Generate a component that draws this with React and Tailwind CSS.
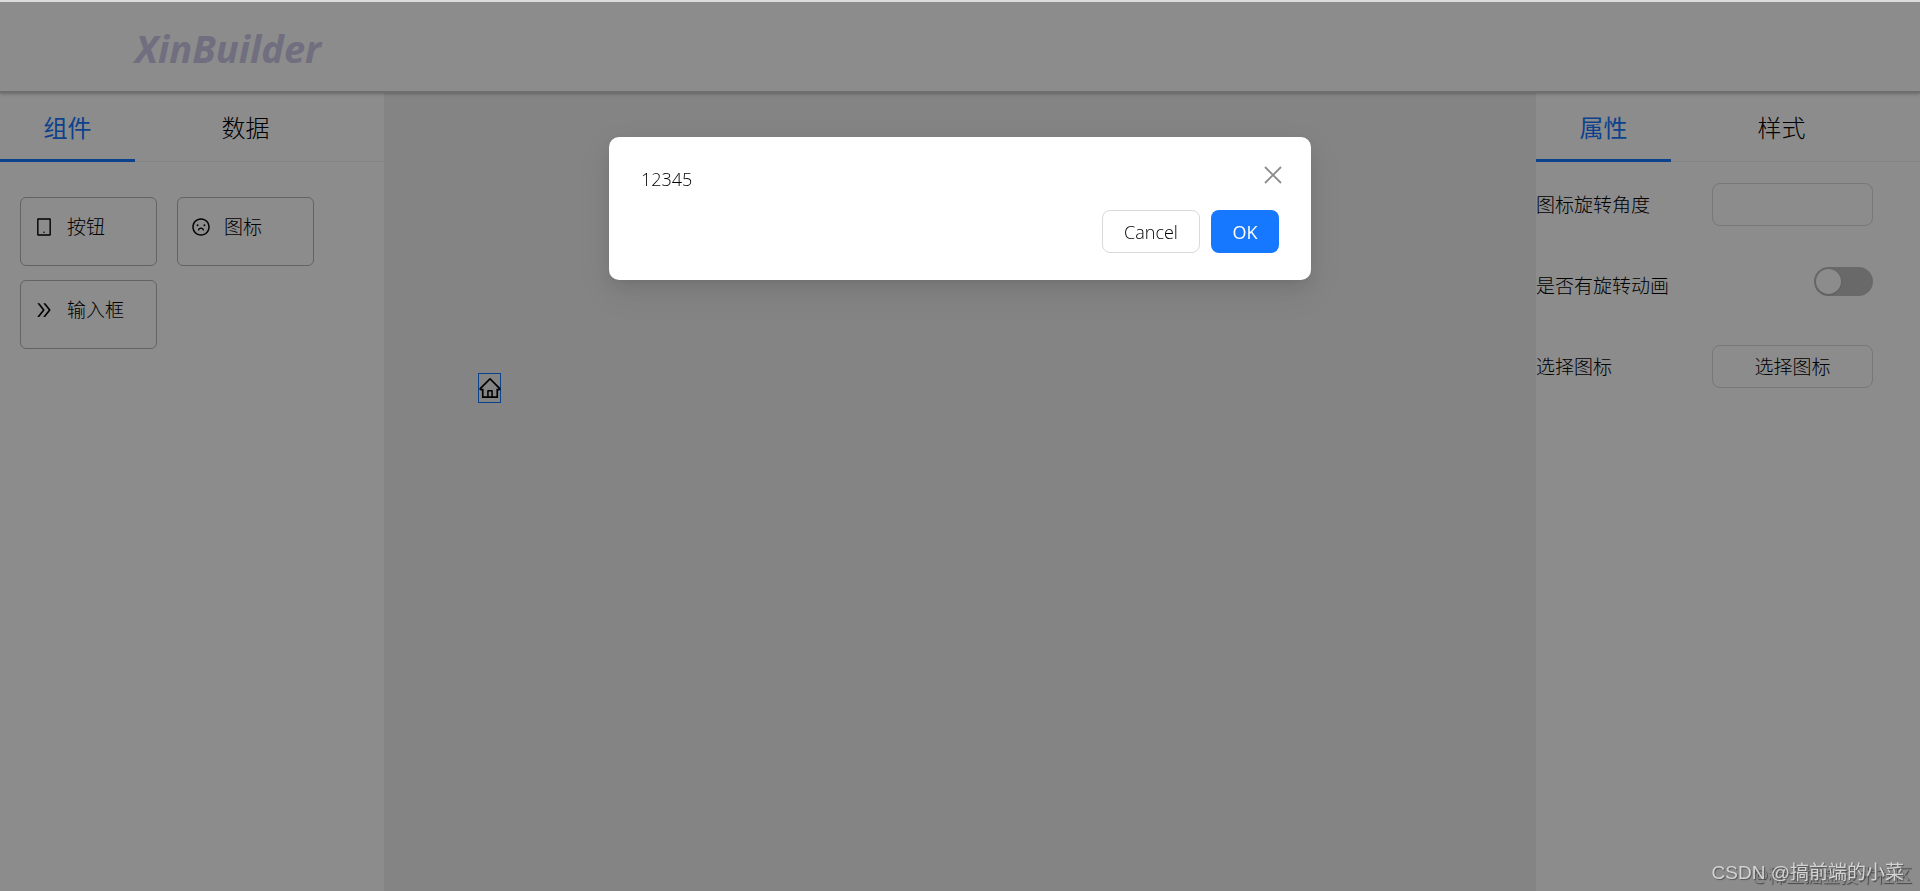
import React, { useState } from "react";
import {
  AiOutlineTablet,
  AiOutlineFrown,
  AiOutlineDoubleRight,
  AiOutlineHome,
} from "react-icons/ai";

const components = [
  { name: "按钮", Icon: AiOutlineTablet },
  { name: "图标", Icon: AiOutlineFrown },
  { name: "输入框", Icon: AiOutlineDoubleRight },
];

const Tabs = ({ items }) => {
  const [active, setActive] = useState(items[0]);

  return (
    <div className="flex gap-[43px] border-b border-[#f0f0f0]">
      {items.map((item) => (
        <button
          key={item}
          onClick={() => setActive(item)}
          className={
            item === active
              ? "w-[135px] h-[69px] pt-1 -mb-px text-2xl font-normal border-b-3 border-[#1677ff] text-[#1677ff]"
              : "w-[135px] h-[69px] pt-1 -mb-px text-2xl border-b-3 border-transparent"
          }
        >
          {item}
        </button>
      ))}
    </div>
  );
};

const Header = () => (
  <header className="relative z-10 h-[93px] flex items-center px-[135px] pt-1 border-t-2 border-t-[#dcdcdc] border-b-2 border-b-[#c8c8c8] shadow-[0_1px_3px_rgba(0,0,0,0.25)]">
    <h1 className="text-[38px] font-bold italic text-[#ccc8e8]">XinBuilder</h1>
  </header>
);

const LeftPanel = () => (
  <aside className="w-1/5 bg-white">
    <Tabs items={["组件", "数据"]} />
    <div className="flex flex-wrap gap-x-5 gap-y-[14px] px-5 pt-[35px]">
      {components.map(({ name, Icon }) => (
        <div key={name} className="w-[137px] h-[69px] flex items-start pl-[13px] pt-[15px] border border-[#b4b4b4] rounded-md">
          <Icon className="w-5 h-7 mr-[13px]" />
          <span className="text-[19px] leading-7">{name}</span>
        </div>
      ))}
    </div>
  </aside>
);

const RightPanel = () => {
  const [angle, setAngle] = useState("");
  const [animated, setAnimated] = useState(false);

  return (
    <aside className="w-1/5 bg-white">
      <Tabs items={["属性", "样式"]} />
      <div className="flex flex-col gap-[38px] pt-[21px] pr-[47px] text-[19px]">
        <div className="h-[43px] flex items-center justify-between">
          <label htmlFor="angle" className="pt-[2px]">图标旋转角度</label>
          <input id="angle" type="text" value={angle} onChange={(e) => setAngle(e.target.value)} className="w-[161px] h-[43px] px-3 border border-[#d9d9d9] rounded-lg outline-none" />
        </div>
        <div className="h-[43px] flex items-center justify-between">
          <label htmlFor="animated" className="pt-[2px]">是否有旋转动画</label>
          <span className="relative self-start mt-[3px] w-[59px] h-[29px] rounded-full bg-[#bfbfbf]">
            <input id="animated" type="checkbox" role="switch" checked={animated} onChange={(e) => setAnimated(e.target.checked)} className="peer absolute inset-0 w-full h-full opacity-0" />
            <span className="absolute left-[2px] top-[2px] w-[25px] h-[25px] rounded-full bg-white shadow peer-checked:left-8 pointer-events-none" />
          </span>
        </div>
        <div className="h-[43px] flex items-center justify-between">
          <span className="pt-[2px]">选择图标</span>
          <button className="w-[161px] h-[43px] pt-[2px] border border-[#d9d9d9] rounded-lg">选择图标</button>
        </div>
      </div>
    </aside>
  );
};

const Modal = ({ onClose }) => (
  <div className="fixed z-20 inset-x-0 top-[2px] bottom-0 bg-black/45">
    <div role="dialog" aria-modal="true" className="w-[702px] mt-[135px] mx-auto px-8 pt-6 pb-[27px] bg-white rounded-[10px] shadow-[0_8px_20px_rgba(0,0,0,0.08),0_4px_8px_-5px_rgba(0,0,0,0.12),0_12px_36px_10px_rgba(0,0,0,0.05)]">
      <div className="flex items-start justify-between">
        <p className="text-lg leading-9">12345</p>
        <button aria-label="Close" onClick={onClose} className="w-[27px] h-[27px] -mr-[7px] flex items-center justify-center text-[#8c8c8c]">
          <svg viewBox="0 0 18 18" className="w-[18px] h-[18px]" fill="none" stroke="currentColor" strokeWidth="1.8">
            <path d="M1 1l16 16M17 1L1 17" />
          </svg>
        </button>
      </div>
      <div className="flex justify-end gap-[11px] mt-[13px] text-lg">
        <button onClick={onClose} className="w-[98px] h-[43px] border border-[#d9d9d9] rounded-lg">Cancel</button>
        <button onClick={onClose} className="w-[68px] h-[43px] bg-[#1677ff] text-white font-normal rounded-lg">OK</button>
      </div>
    </div>
  </div>
);

const App = () => {
  const [open, setOpen] = useState(true);

  return (
    <div className="min-h-screen flex flex-col bg-white text-black font-light font-['Open_Sans','Noto_Sans_CJK_SC',sans-serif]">
      <Header />
      <main className="flex flex-1">
        <LeftPanel />
        <section className="w-3/5 relative bg-[#f0f0f0]">
          <div className="absolute left-[94px] top-[280px] w-[23px] h-[30px] flex items-center justify-center border border-[#1677ff] text-black">
            <AiOutlineHome className="w-6 h-6 shrink-0" />
          </div>
        </section>
        <RightPanel />
      </main>
      {open && <Modal onClose={() => setOpen(false)} />}
      <div className="fixed z-30 right-2 bottom-1 text-lg leading-6 font-normal text-[#8c8c8c] [text-shadow:1px_1px_1px_#444]">@稀土掘金技术社区</div>
      <div className="fixed z-30 right-4 bottom-[6px] text-[19px] leading-6 font-normal text-[#d4d4d4] [text-shadow:1px_1px_1px_#555] font-['Liberation_Sans','Noto_Sans_CJK_SC',sans-serif]">CSDN @搞前端的小菜</div>
    </div>
  );
};

export default App;
